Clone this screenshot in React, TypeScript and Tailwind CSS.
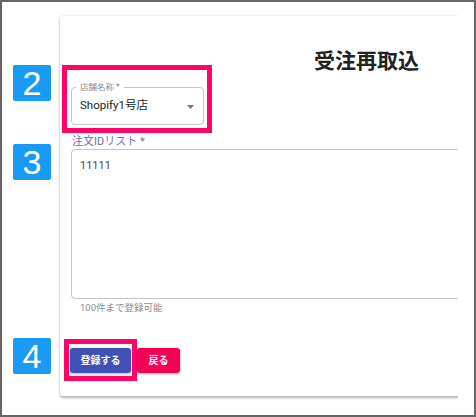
import React from "react";

function Badge({ n, top }: { n: string; top: string }) {
  return (
    <div
      className={`absolute left-[11px] ${top} w-[38px] h-[36px] rounded-[2px] bg-[#1a9bf3] flex items-center justify-center text-white text-[34px] leading-none font-['Liberation_Sans',Arial,sans-serif]`}
    >
      {n}
    </div>
  );
}

export default function App() {
  return (
    <div className="relative w-[476px] h-[417px] border-2 border-[#666666] bg-white overflow-hidden font-[Roboto,'Noto_Sans_CJK_JP',sans-serif]">
      {/* clipped card region */}
      <div className="ml-[48px] mt-[8px] w-[408px] h-[400px] pt-[6px] pl-[10px] overflow-hidden">
        <div className="w-[620px] h-[380px] bg-white rounded-[3px] shadow-[0_2px_3px_rgba(0,0,0,0.28),0_0_2px_rgba(0,0,0,0.14)] pl-[2px] pt-[28px]">
          {/* row: store select + title */}
          <div className="flex items-start">
            <div className="mt-[21px] border-[5px] border-[#ff0468] pt-[17px] pl-[4px] pr-[3px] pb-[3px]">
              <div className="relative w-[133px] h-[38px] border border-[#c4c4c4] rounded-[4px] flex items-center pl-[8px] pr-[9px]">
                <span className="absolute left-[4px] -top-[7px] bg-white px-[4px] text-[8.5px] leading-[12px] text-[#8a8a8a]">
                  店舗名称 *
                </span>
                <span className="flex-1 text-[11.5px] text-[#222222]">Shopify1号店</span>
                <svg width="7" height="4" viewBox="0 0 7 4" className="mt-[1px]">
                  <polygon points="0,0 7,0 3.5,4" fill="#757575" />
                </svg>
              </div>
            </div>
            <h1 className="ml-[102px] text-[21px] leading-[30px] font-bold text-[#222222] font-['Noto_Sans_CJK_JP',sans-serif]">
              受注再取込
            </h1>
          </div>

          {/* order id list */}
          <div className="ml-[10px] mt-[2px] text-[11px] leading-[14px] text-[#6c70b0]">注文IDリスト *</div>
          <div className="ml-[9px] w-[600px] h-[150px] border border-[#c4c4c4] rounded-[4px] pl-[8px] pt-[9px] text-[11px] leading-[14px] text-[#4a4a4a]">
            11111
          </div>
          <div className="ml-[18px] mt-[3px] text-[9.5px] leading-[12px] text-[#8a8a8a]">100件まで登録可能</div>

          {/* buttons */}
          <div className="ml-[2px] mt-[25px] flex items-center">
            <div className="border-[5px] border-[#ff0468] px-[1px] py-[3px]">
              <button className="w-[61px] h-[25px] rounded-[3px] bg-[#3f51b5] text-white text-[10px] font-bold shadow-[0_1px_3px_rgba(0,0,0,0.3)]">
                登録する
              </button>
            </div>
            <button className="w-[43px] h-[25px] rounded-[3px] bg-[#f50057] text-white text-[10px] font-bold shadow-[0_1px_3px_rgba(0,0,0,0.3)]">
              戻る
            </button>
          </div>
        </div>
      </div>

      <Badge n="2" top="top-[63px]" />
      <Badge n="3" top="top-[142px]" />
      <Badge n="4" top="top-[336px]" />
    </div>
  );
}
